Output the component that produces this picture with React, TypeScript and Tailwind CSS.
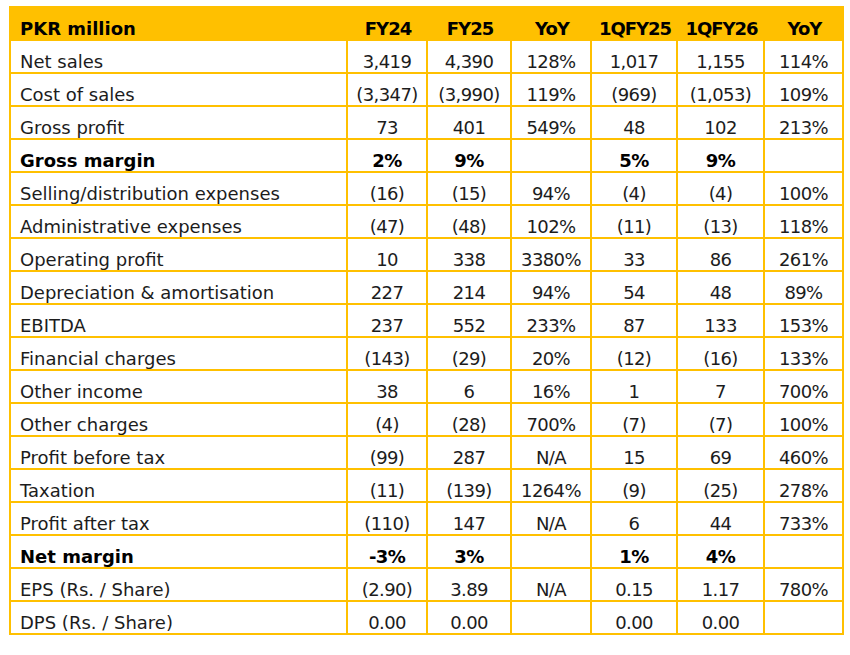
import React from "react";

type Row = { label: string; vals: string[]; bold?: boolean };

const rows: Row[] = [
  { label: "Net sales", vals: ["3,419", "4,390", "128%", "1,017", "1,155", "114%"] },
  { label: "Cost of sales", vals: ["(3,347)", "(3,990)", "119%", "(969)", "(1,053)", "109%"] },
  { label: "Gross profit", vals: ["73", "401", "549%", "48", "102", "213%"] },
  { label: "Gross margin", vals: ["2%", "9%", "", "5%", "9%", ""], bold: true },
  { label: "Selling/distribution expenses", vals: ["(16)", "(15)", "94%", "(4)", "(4)", "100%"] },
  { label: "Administrative expenses", vals: ["(47)", "(48)", "102%", "(11)", "(13)", "118%"] },
  { label: "Operating profit", vals: ["10", "338", "3380%", "33", "86", "261%"] },
  { label: "Depreciation & amortisation", vals: ["227", "214", "94%", "54", "48", "89%"] },
  { label: "EBITDA", vals: ["237", "552", "233%", "87", "133", "153%"] },
  { label: "Financial charges", vals: ["(143)", "(29)", "20%", "(12)", "(16)", "133%"] },
  { label: "Other income", vals: ["38", "6", "16%", "1", "7", "700%"] },
  { label: "Other charges", vals: ["(4)", "(28)", "700%", "(7)", "(7)", "100%"] },
  { label: "Profit before tax", vals: ["(99)", "287", "N/A", "15", "69", "460%"] },
  { label: "Taxation", vals: ["(11)", "(139)", "1264%", "(9)", "(25)", "278%"] },
  { label: "Profit after tax", vals: ["(110)", "147", "N/A", "6", "44", "733%"] },
  { label: "Net margin", vals: ["-3%", "3%", "", "1%", "4%", ""], bold: true },
  { label: "EPS (Rs. / Share)", vals: ["(2.90)", "3.89", "N/A", "0.15", "1.17", "780%"] },
  { label: "DPS (Rs. / Share)", vals: ["0.00", "0.00", "", "0.00", "0.00", ""] },
];

const headers = ["FY24", "FY25", "YoY", "1QFY25", "1QFY26", "YoY"];

export default function App() {
  return (
    <div
      className="w-[850px] h-[655px] bg-white pt-[6px] pl-[9px] text-[#1c1c1c]"
      style={{ fontFamily: '"DejaVu Sans", "Liberation Sans", sans-serif' }}
    >
      <div className="grid w-[835px] grid-cols-[337px_80px_84px_80px_86px_87px_79px] border-l-2 border-t-2 border-[#FFC000]">
        <div className="flex h-[33px] items-end bg-[#FFC000] pl-[9px] pb-[3px] text-[18px] font-bold leading-none text-black">
          PKR million
        </div>
        {headers.map((h, i) => (
          <div
            key={i}
            className="flex h-[33px] items-end justify-center bg-[#FFC000] pb-[3px] text-[18px] font-bold leading-none tracking-[-1px] text-black"
          >
            {h}
          </div>
        ))}
        {rows.map((r, ri) => (
          <React.Fragment key={ri}>
            <div
              className={`flex h-[33px] items-end border-r-2 border-b-2 border-[#FFC000] pl-[9px] pb-[1px] text-[18px] leading-none ${
                r.bold ? "font-bold text-black" : "font-normal"
              }`}
            >
              {r.label}
            </div>
            {r.vals.map((v, vi) => (
              <div
                key={vi}
                className={`flex h-[33px] items-end justify-center border-r-2 border-b-2 border-[#FFC000] pb-[1px] text-[18px] leading-none tracking-[-0.6px] ${
                  r.bold ? "font-bold text-black" : "font-normal"
                }`}
              >
                {v}
              </div>
            ))}
          </React.Fragment>
        ))}
      </div>
    </div>
  );
}
